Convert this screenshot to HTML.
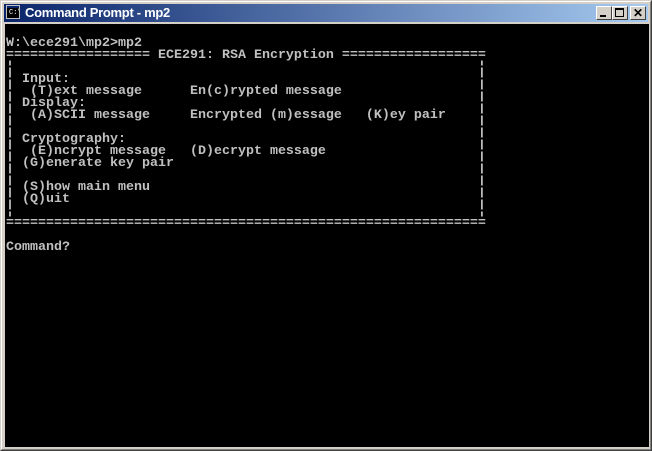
<!DOCTYPE html>
<html><head><style>
html,body{margin:0;padding:0;width:652px;height:451px;overflow:hidden;background:#d4d0c8}
.win{position:absolute;left:0;top:0;width:650px;height:449px;border-top:1px solid #d4d0c8;border-left:1px solid #d4d0c8;border-right:1px solid #404040;border-bottom:1px solid #404040;background:#d4d0c8}
.win:before{content:"";position:absolute;left:0;top:0;right:0;bottom:0;border-top:1px solid #fff;border-left:1px solid #fff;border-right:1px solid #808080;border-bottom:1px solid #808080}
.title{position:absolute;left:3px;top:3px;width:644px;height:18px;background:linear-gradient(to right,#0a246a,#a6caf0)}
.ttext{position:absolute;left:21px;top:1px;color:#fff;font:bold 13px "Liberation Sans",sans-serif;letter-spacing:-0.3px}
.icon{position:absolute;left:2px;top:1px;width:14px;height:14px;background:#000;border:1px solid #c0c0c0;box-sizing:border-box;color:#fff;font:7px "Liberation Mono",monospace;line-height:8px;overflow:hidden}
.icon:before{content:"";position:absolute;left:0;top:0;right:0;height:2px;background:#0a246a}
.btn{position:absolute;top:2px;width:16px;height:14px;background:#d4d0c8;box-sizing:border-box;border-top:1px solid #fff;border-left:1px solid #fff;border-right:1px solid #404040;border-bottom:1px solid #404040}
.con{position:absolute;left:4px;top:23px;width:644px;height:423px;background:#000}
pre{margin:0;position:absolute;left:1px;top:14px;color:#c0c0c0;font:bold 13.33px "Liberation Mono",monospace;line-height:12px;white-space:pre}
</style></head><body>
<div class="win">
<div class="title">
<div class="icon"><span style="position:absolute;left:2px;top:3px">C:\</span></div>
<div class="ttext">Command Prompt - mp2</div>
<div class="btn" style="left:592px"><div style="position:absolute;left:3px;top:8px;width:6px;height:2px;background:#000"></div></div>
<div class="btn" style="left:608px"><div style="position:absolute;left:2px;top:1px;width:9px;height:9px;box-sizing:border-box;border:1px solid #000;border-top-width:2px"></div></div>
<div class="btn" style="left:626px;font:bold 12px 'Liberation Sans',sans-serif;line-height:12px;text-align:center">✕</div>
</div>
<div class="con"><pre>W:\ece291\mp2&gt;mp2
================== ECE291: RSA Encryption ==================
¦                                                          ¦
¦ Input:                                                   ¦
¦  (T)ext message      En(c)rypted message                 ¦
¦ Display:                                                 ¦
¦  (A)SCII message     Encrypted (m)essage   (K)ey pair    ¦
¦                                                          ¦
¦ Cryptography:                                            ¦
¦  (E)ncrypt message   (D)ecrypt message                   ¦
¦ (G)enerate key pair                                      ¦
¦                                                          ¦
¦ (S)how main menu                                         ¦
¦ (Q)uit                                                   ¦
¦                                                          ¦
============================================================

Command?</pre></div>
</div>
</body></html>
